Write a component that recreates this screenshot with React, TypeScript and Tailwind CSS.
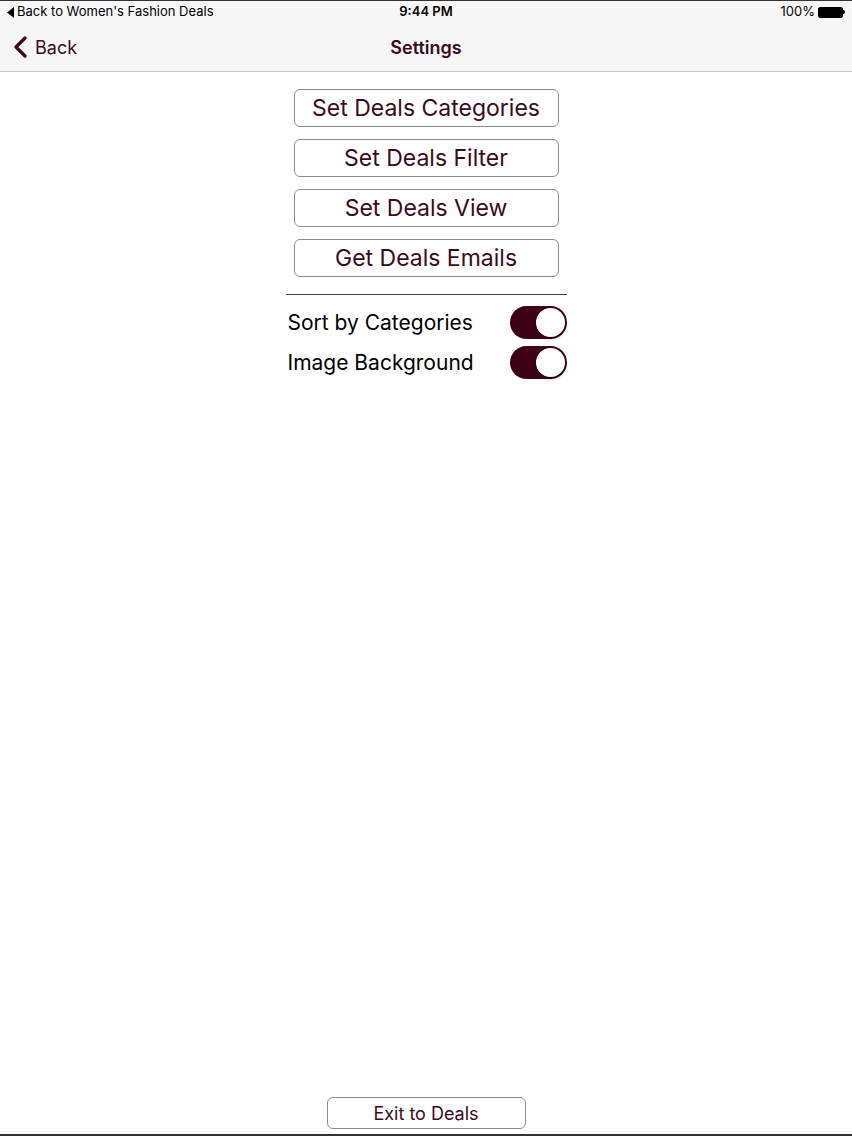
const maroon = "text-[#3b0a1c]";

function ActionButton({ label }: { label: string }) {
  return (
    <button
      className={`flex h-[38px] w-[265px] items-center justify-center rounded-[6px] border border-[#8e8a8d] bg-white text-[23px] leading-none ${maroon}`}
    >
      {label}
    </button>
  );
}

function Toggle() {
  return (
    <div className="relative h-[33px] w-[57px] rounded-full bg-[#3d0016]">
      <div className="absolute right-[2px] top-[2px] h-[29px] w-[29px] rounded-full bg-white shadow-[0_2px_3px_rgba(0,0,0,0.3)]" />
    </div>
  );
}

export default function App() {
  return (
    <div className="flex h-[1136px] w-[852px] flex-col border-t border-b-2 border-[#333] bg-white font-['Inter',sans-serif]">
      {/* status bar */}
      <div className="flex h-[22px] items-center bg-[#f7f7f8] px-[7px] text-[13px] text-black">
        <div className="flex w-[300px] items-center gap-[2px]">
          <svg width="8" height="11" viewBox="0 0 8 11">
            <path d="M7 0 L0 5.5 L7 11 Z" fill="#000" />
          </svg>
          <span>Back to Women's Fashion Deals</span>
        </div>
        <div className="flex-1 text-center font-semibold">9:44 PM</div>
        <div className="flex w-[300px] items-center justify-end gap-[3px]">
          <span>100%</span>
          <div className="flex items-center">
            <div className="h-[11px] w-[25px] rounded-[2px] border border-black bg-black" />
            <div className="h-[4px] w-[2px] rounded-r-sm bg-black" />
          </div>
        </div>
      </div>

      {/* nav bar */}
      <div className="relative flex h-[49px] items-center border-b border-[#c8c7cc] bg-[#f7f7f8]">
        <div className={`flex items-center gap-[8px] pl-[13px] text-[18px] ${maroon}`}>
          <svg width="14" height="22" viewBox="0 0 14 22">
            <path d="M12 2 L3 11 L12 20" fill="none" stroke="#3b0a1c" strokeWidth="3.2" strokeLinecap="round" strokeLinejoin="round" />
          </svg>
          <span>Back</span>
        </div>
        <div className={`absolute left-0 right-0 text-center text-[18px] font-semibold ${maroon}`}>
          Settings
        </div>
      </div>

      {/* content */}
      <div className="flex flex-1 flex-col items-center pt-[17px]">
        <div className="flex flex-col items-center gap-[12px]">
          <ActionButton label="Set Deals Categories" />
          <ActionButton label="Set Deals Filter" />
          <ActionButton label="Set Deals View" />
          <ActionButton label="Get Deals Emails" />
        </div>
        <div className="mt-[17px] h-px w-[281px] bg-[#444]" />
        <div className="mt-[11px] flex w-[281px] flex-col gap-[7px]">
          <div className="flex items-center justify-between">
            <span className="pl-[2px] text-[21px] text-black">Sort by Categories</span>
            <Toggle />
          </div>
          <div className="flex items-center justify-between">
            <span className="pl-[2px] text-[21px] text-black">Image Background</span>
            <Toggle />
          </div>
        </div>
        <div className="flex-1" />
        <button
          className={`mb-[5px] flex h-[32px] w-[199px] items-center justify-center rounded-[6px] border border-[#8e8a8d] text-[18px] ${maroon}`}
        >
          Exit to Deals
        </button>
      </div>
    </div>
  );
}
